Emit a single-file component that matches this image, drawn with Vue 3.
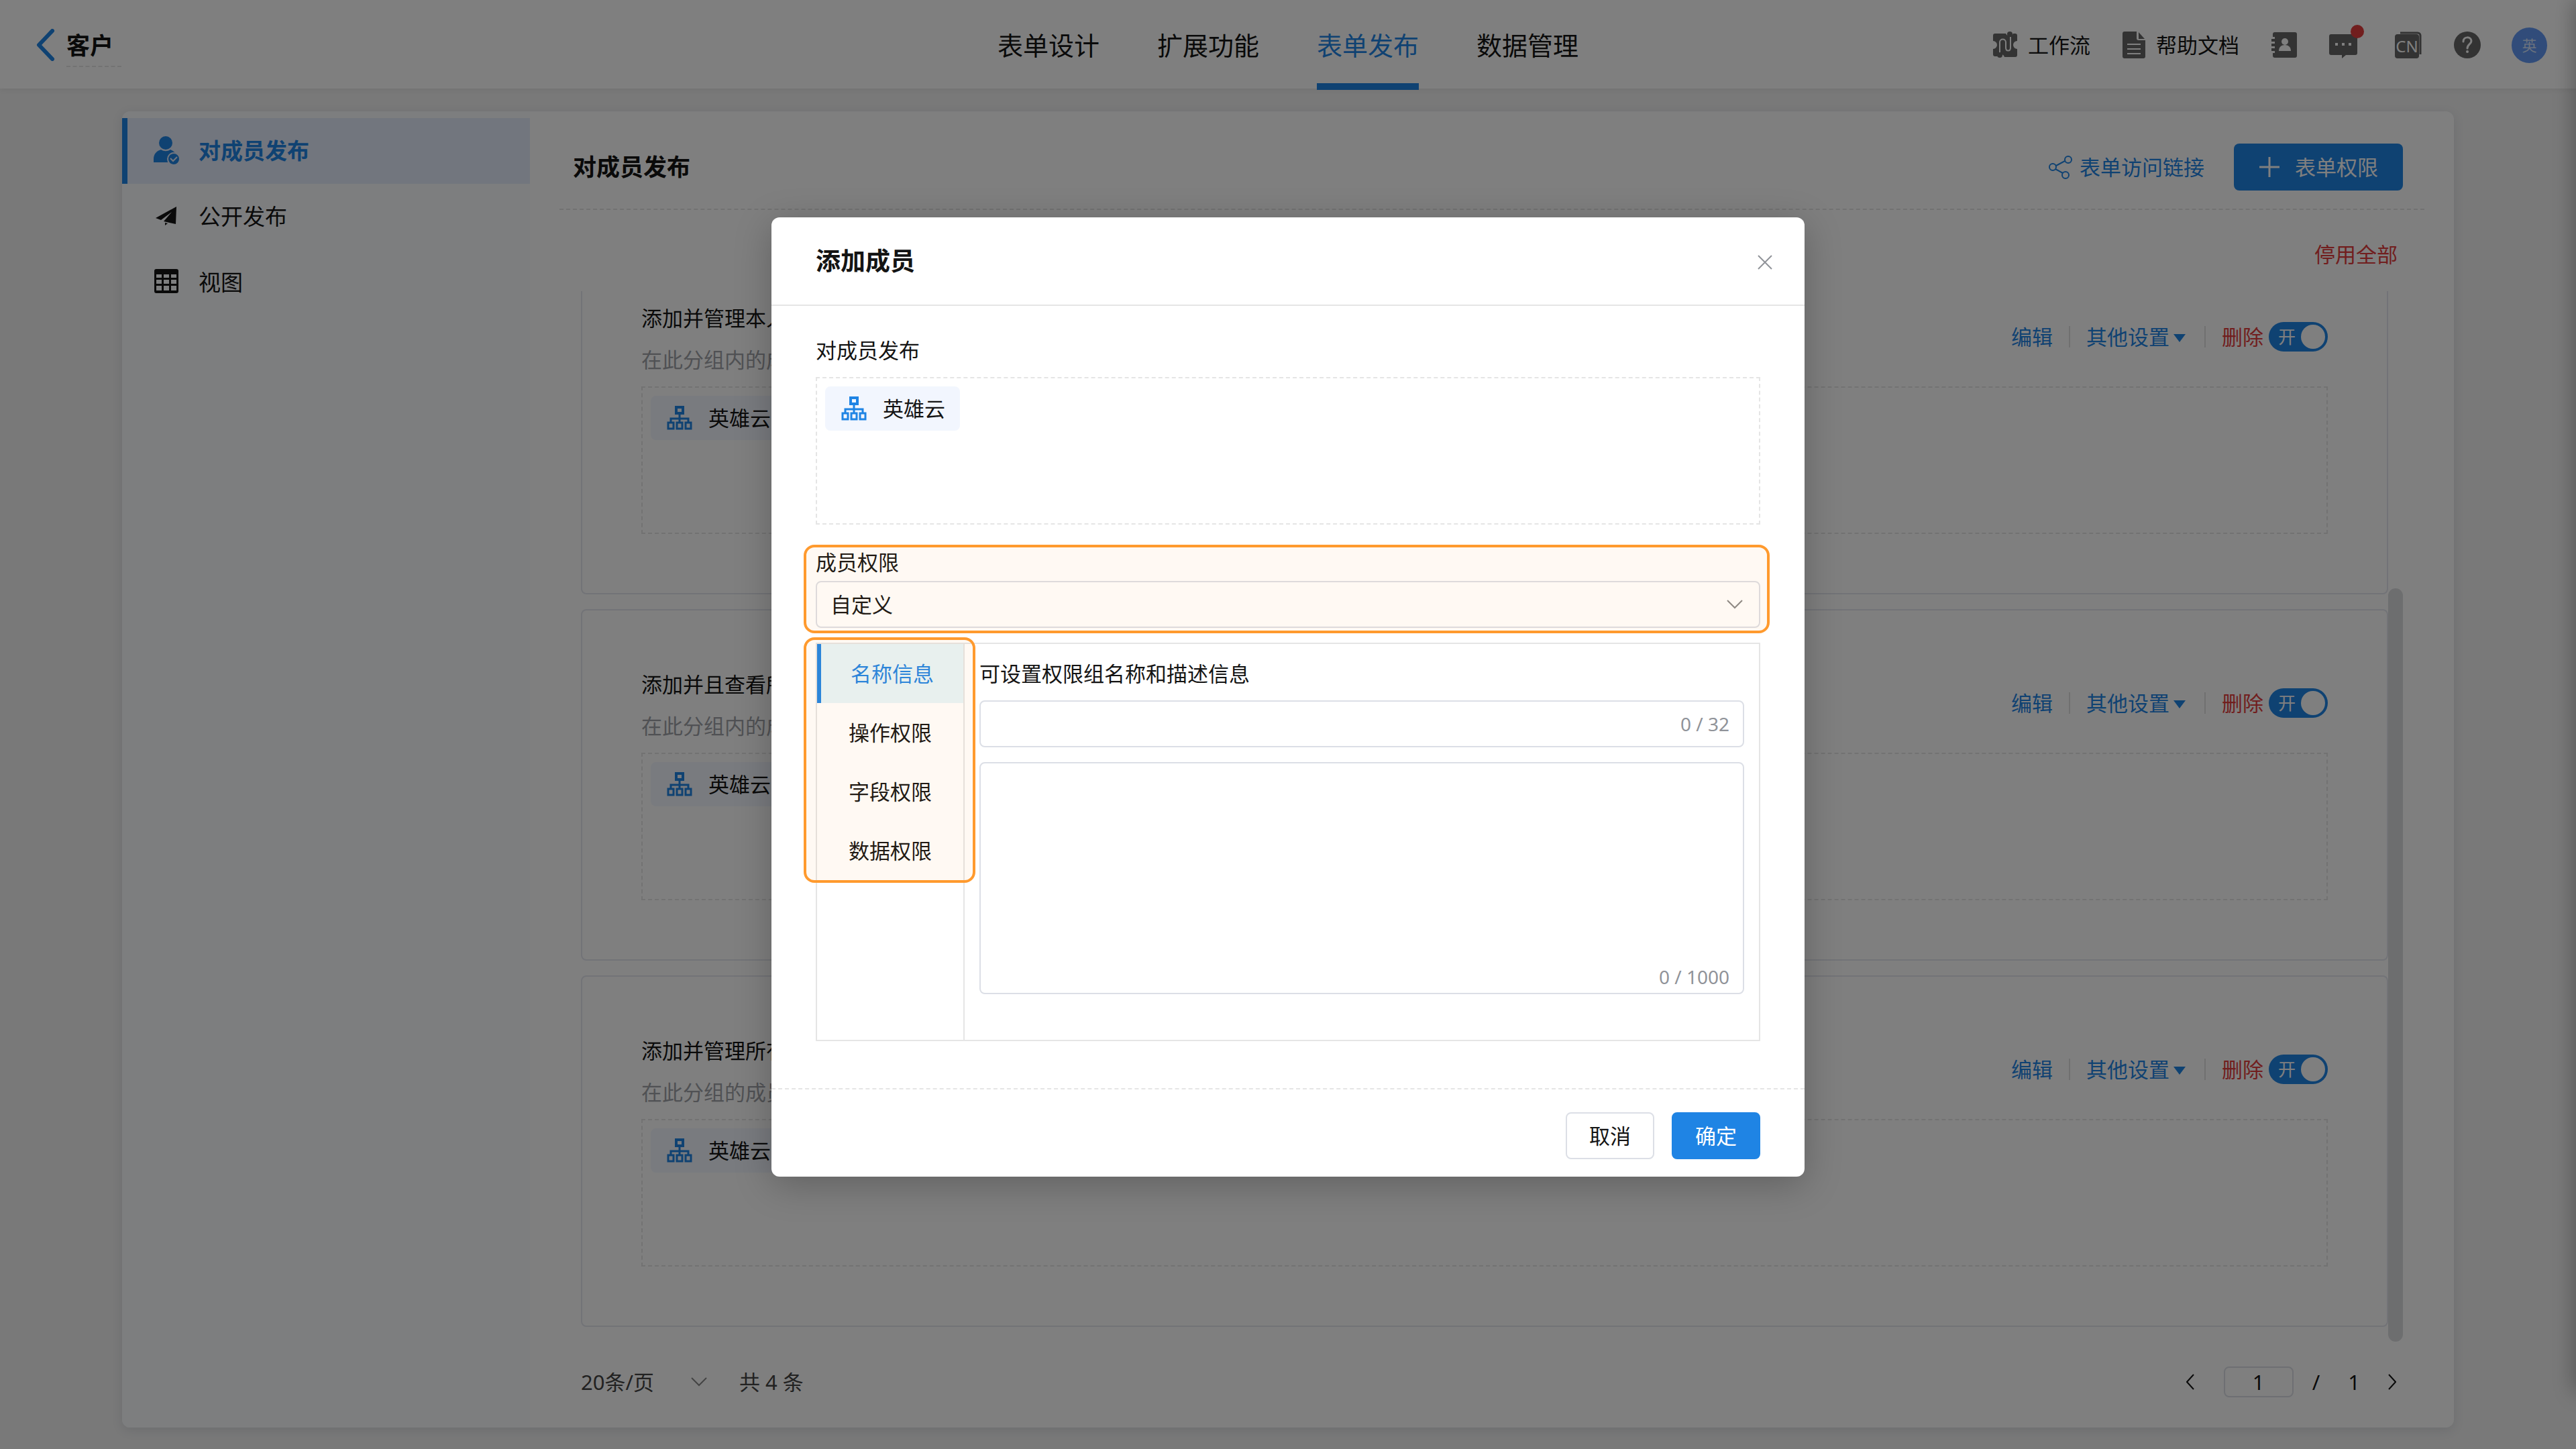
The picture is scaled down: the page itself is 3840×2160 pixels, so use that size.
<template>
  <div class="page">
    <header class="topbar">
      <div class="back">
        <button class="plain" aria-label="返回">
          <svg class="back-icon" viewBox="0 0 28 48"><path d="M24 3 4 24l20 21" fill="none" stroke="currentColor" stroke-width="6" stroke-linecap="round" stroke-linejoin="round" /></svg>
        </button>
        <span class="form-name">客户</span>
      </div>

      <nav class="main-nav">
        <a
          v-for="item in navItems"
          :key="item"
          href="#"
          :class="{ active: item === currentNav }"
          @click.prevent="currentNav = item"
        >{{ item }}</a>
      </nav>

      <div class="tools">
        <a href="#" class="tool-link">
          <svg class="tool-icon" viewBox="0 0 36 40">
            <path fill="currentColor" d="M3 3h16a6 6 0 0 0 11 0h3a3 3 0 0 1 3 3v8a6 6 0 0 0 0 12v9a3 3 0 0 1-3 3H17a6 6 0 0 0-11-1H3a3 3 0 0 1-3-3v-8a6 6 0 0 0 0-12V6a3 3 0 0 1 3-3z" />
            <path fill="none" stroke="#fff" stroke-width="2" d="M10 32V16c0-6 9-6 9 0v8c0 6 7 6 7 0V8" />
            <circle cx="25" cy="4" r="4" fill="currentColor" />
            <circle cx="10" cy="35" r="4" fill="currentColor" />
          </svg>
          <span>工作流</span>
        </a>
        <a href="#" class="tool-link doc-link">
          <svg class="tool-icon doc-icon" viewBox="0 0 34 40">
            <path fill="currentColor" d="M3 0h18v10a3 3 0 0 0 3 3h10v24a3 3 0 0 1-3 3H3a3 3 0 0 1-3-3V3a3 3 0 0 1 3-3z" />
            <path fill="currentColor" d="M24 1l9 10h-9z" />
            <path stroke="#fff" stroke-width="2" d="M7 19h20M7 26h20M7 33h20" />
          </svg>
          <span>帮助文档</span>
        </a>
        <button class="plain" aria-label="通讯录">
          <svg class="tool-icon book-icon" viewBox="0 0 38 40">
            <path fill="currentColor" d="M5 1h30a3 3 0 0 1 3 3v32a3 3 0 0 1-3 3H5a3 3 0 0 1-3-3v-4h3v-3H0v-4h5v-3H0v-4h5v-3H0v-4h5V8H2V4a3 3 0 0 1 3-3z" />
            <circle cx="20" cy="15" r="5" fill="#fff" />
            <path fill="#fff" d="M11 29c0-6 4-9 9-9s9 3 9 9z" />
          </svg>
        </button>
        <button class="plain message" aria-label="消息">
          <svg class="tool-icon message-icon" viewBox="0 0 42 40">
            <path fill="currentColor" d="M3 4h36a3 3 0 0 1 3 3v25a3 3 0 0 1-3 3H25l-6 5v-5H3a3 3 0 0 1-3-3V7a3 3 0 0 1 3-3z" />
            <path fill="#fff" d="M9 17h4v4H9zM19 17h4v4h-4zM29 17h4v4h-4z" />
          </svg>
          <i class="dot"></i>
        </button>
        <button class="plain language" aria-label="语言">
          <svg class="language-back" viewBox="0 0 40 40">
            <path fill="none" stroke="currentColor" stroke-width="3" d="M8 2h26a4 4 0 0 1 4 4v28" />
          </svg>
          <span>CN</span>
        </button>
        <button class="plain" aria-label="帮助">
          <svg class="tool-icon help-icon" viewBox="0 0 40 40">
            <circle cx="20" cy="20" r="20" fill="currentColor" />
            <path fill="none" stroke="#fff" stroke-width="3" stroke-linecap="round" d="M14 15c0-8 12-8 12-1 0 5-6 5-6 11" />
            <circle cx="20" cy="30" r="2" fill="#fff" />
          </svg>
        </button>
        <span class="avatar">英</span>
      </div>
    </header>

    <div class="panel">
      <aside class="sidebar">
        <a href="#" class="side-item active">
          <svg class="side-icon" viewBox="0 0 40 44">
            <circle cx="19" cy="10" r="10" fill="currentColor" />
            <path fill="currentColor" d="M1 39V34c0-7 4-12 11-14 4 3 10 3 14 0 5 2 8 5 9 9v10z" />
            <circle cx="31" cy="34" r="9" fill="currentColor" stroke="#e4ecfc" stroke-width="2" />
            <path fill="none" stroke="#e4ecfc" stroke-width="2" d="M26 33l4 4 6-6" />
          </svg>
          对成员发布
        </a>
        <a href="#" class="side-item">
          <svg class="side-icon" viewBox="0 0 40 44">
            <path fill="currentColor" d="M35 7 4 24l8 3 16-12-12 14 18 4zM18 31v4l4-3z" />
          </svg>
          公开发布
        </a>
        <a href="#" class="side-item">
          <svg class="side-icon" viewBox="0 0 40 44">
            <path fill="currentColor" fill-rule="evenodd" d="M5 2h30a3 3 0 0 1 3 3v30a3 3 0 0 1-3 3H5a3 3 0 0 1-3-3V5a3 3 0 0 1 3-3zM5 10v5h8v-5zM16 10v5h8v-5zM27 10v5h8v-5zM5 18v6h8v-6zM16 18v6h8v-6zM27 18v6h8v-6zM5 27v7h8v-7zM16 27v7h8v-7zM27 27v7h8v-7z" />
          </svg>
          视图
        </a>
      </aside>

      <main class="content">
        <div class="content-head">
          <h1>对成员发布</h1>
          <a href="#" class="share">
            <svg class="share-icon" viewBox="0 0 36 36">
              <g fill="none" stroke="currentColor" stroke-width="2">
                <circle cx="6" cy="18" r="5" /><circle cx="29" cy="7" r="5" /><circle cx="25" cy="30" r="5" />
                <path d="M11 16l13-7M10 21l11 6" />
              </g>
            </svg>
            表单访问链接
          </a>
          <button class="add-button">
            <svg class="plus-icon" viewBox="0 0 32 32"><path d="M16 1v30M1 16h30" stroke="currentColor" stroke-width="3" /></svg>
            表单权限
          </button>
        </div>
        <div class="toolbar">
          <button class="plain danger">停用全部</button>
        </div>

        <div class="list">
          <section v-for="card in cards" :key="card.title" class="card">
            <div class="card-head">
              <div>
                <h2>{{ card.title }}</h2>
                <p>{{ card.desc }}</p>
              </div>
              <div class="ops">
                <button class="plain link">编辑</button>
                <i class="sep"></i>
                <button class="plain link">其他设置<svg class="caret" viewBox="0 0 18 12"><path d="M0 0h18L9 12z" fill="currentColor" /></svg></button>
                <i class="sep"></i>
                <button class="plain danger">删除</button>
                <label class="switch">
                  <input v-model="card.enabled" type="checkbox">
                  <span>开</span>
                </label>
              </div>
            </div>
            <div class="member-box">
              <span class="chip">
                <svg class="org-icon" viewBox="0 0 38 36">
                  <path fill="currentColor" fill-rule="evenodd" d="M12 0h14v13H12zM16 4v5h6V4z" />
                  <path fill="none" stroke="currentColor" stroke-width="3" d="M19 12v12M6 25v-6h26v6M2 25h8v9H2zM15 25h8v9h-8zM28 25h8v9h-8z" />
                </svg>
                英雄云
              </span>
            </div>
          </section>
          <i class="scrollbar"></i>
        </div>

        <footer class="pagination">
          <div class="page-size">
            <select v-model="pageSize" aria-label="每页条数">
              <option value="20">20条/页</option>
            </select>
            <svg class="chevron" viewBox="0 0 24 14"><path d="M1 1l11 11L23 1" fill="none" stroke="currentColor" stroke-width="2" /></svg>
          </div>
          <span class="total">共 4 条</span>
          <div class="pager">
            <button class="plain" aria-label="上一页">
              <svg class="arrow" viewBox="0 0 12 24"><path d="M11 1 1 12l10 11" fill="none" stroke="currentColor" stroke-width="2" /></svg>
            </button>
            <input v-model="page" type="text" aria-label="页码">
            <span>/</span>
            <span class="page-count">1</span>
            <button class="plain" aria-label="下一页">
              <svg class="arrow" viewBox="0 0 12 24"><path d="M1 1l10 11L1 23" fill="none" stroke="currentColor" stroke-width="2" /></svg>
            </button>
          </div>
        </footer>
      </main>
    </div>
    <i class="drawer-edge"></i>

    <div class="mask">
      <div class="dialog" role="dialog" aria-labelledby="dialog-title">
        <div class="dialog-head">
          <h3 id="dialog-title">添加成员</h3>
          <button class="plain close" aria-label="关闭">
            <svg class="close-icon" viewBox="0 0 22 22"><path d="M1 1l20 20M21 1 1 21" stroke="currentColor" stroke-width="2" /></svg>
          </button>
        </div>

        <div class="dialog-body">
          <div class="field-label">对成员发布</div>
          <div class="member-box">
            <span class="chip">
              <svg class="org-icon" viewBox="0 0 38 36">
                <path fill="currentColor" fill-rule="evenodd" d="M12 0h14v13H12zM16 4v5h6V4z" />
                <path fill="none" stroke="currentColor" stroke-width="3" d="M19 12v12M6 25v-6h26v6M2 25h8v9H2zM15 25h8v9h-8zM28 25h8v9h-8z" />
              </svg>
              英雄云
            </span>
          </div>

          <div class="role marked">
            <label for="role">成员权限</label>
            <div class="select-box">
              <select id="role" v-model="role">
                <option value="custom">自定义</option>
              </select>
              <svg class="chevron" viewBox="0 0 24 14"><path d="M1 1l11 11L23 1" fill="none" stroke="currentColor" stroke-width="2" /></svg>
            </div>
          </div>

          <div class="setting">
            <div class="tabs">
              <div class="tab-list marked">
                <button
                  v-for="tab in tabs"
                  :key="tab"
                  class="tab"
                  :class="{ active: tab === currentTab }"
                  @click="currentTab = tab"
                >{{ tab }}</button>
              </div>
            </div>
            <div class="tab-pane">
              <label for="group-name">可设置权限组名称和描述信息</label>
              <div class="input-box">
                <input id="group-name" v-model="groupName" type="text" maxlength="32">
                <span class="count">{{ groupName.length }} / 32</span>
              </div>
              <div class="input-box">
                <textarea v-model="groupDesc" maxlength="1000" aria-label="描述信息"></textarea>
                <span class="count">{{ groupDesc.length }} / 1000</span>
              </div>
            </div>
          </div>
        </div>

        <div class="dialog-foot">
          <button class="btn">取消</button>
          <button class="btn primary">确定</button>
        </div>
      </div>
    </div>
  </div>
</template>

<script setup>
import { ref } from 'vue';

const navItems = ['表单设计', '扩展功能', '表单发布', '数据管理'];
const currentNav = ref('表单发布');

const cards = ref([
  { title: '添加并管理本人', desc: '在此分组内的成', enabled: true },
  { title: '添加并且查看所', desc: '在此分组内的成', enabled: true },
  { title: '添加并管理所有', desc: '在此分组的成员', enabled: true }
]);

const pageSize = ref('20');
const page = ref('1');

const role = ref('custom');
const tabs = ['名称信息', '操作权限', '字段权限', '数据权限'];
const currentTab = ref('名称信息');
const groupName = ref('');
const groupDesc = ref('');
</script>

<style>
body {
  background: #f2f2f2;
}
</style>

<style scoped>
.page {
  position: relative;
  display: flex;
  flex-direction: column;
  height: 100vh;
  overflow: hidden;
  font-family: "Noto Sans", "Noto Sans CJK SC", sans-serif;
  font-size: 31px;
  line-height: 44px;
  color: #141414;
}

.page *, .page *::after {
  box-sizing: border-box;
}

a {
  color: inherit;
  text-decoration: none;
}

svg {
  display: block;
  flex: none;
}

h1, h2, h3, p {
  margin: 0;
}

button, input, select, textarea {
  font: inherit;
  color: inherit;
}

.plain {
  padding: 0;
  border: none;
  background: none;
  cursor: pointer;
}

/* top bar */
.topbar {
  position: relative;
  display: grid;
  grid-template-columns: 1fr auto 1fr;
  flex: none;
  height: 132px;
  background: #fff;
  box-shadow: 0 2px 8px rgba(0, 0, 0, 0.06);
}

.back {
  display: flex;
  align-items: center;
  gap: 17px;
  padding-left: 54px;
}

.back button {
  color: #1f84e4;
}

.back-icon {
  width: 28px;
  height: 48px;
}

.form-name {
  min-width: 82px;
  padding-top: 4px;
  border-bottom: 2px dashed #e5e5e5;
  font-size: 35px;
  font-weight: 700;
  line-height: 60px;
}

.main-nav {
  display: flex;
  gap: 86px;
  font-size: 38px;
}

.main-nav a {
  height: 134px;
  line-height: 134px;
}

.main-nav .active {
  border-bottom: 10px solid #1f84e4;
  color: #1f84e4;
}

.tools {
  display: flex;
  align-items: center;
  justify-content: flex-end;
  padding-right: 43px;
}

.tools svg, .tools button {
  color: #666;
}

.tool-link {
  display: flex;
  align-items: center;
  gap: 16px;
  margin-right: 48px;
}

.tool-icon {
  width: 36px;
  height: 40px;
}

.doc-icon {
  width: 34px;
}

.book-icon {
  width: 38px;
}

.message-icon {
  width: 42px;
}

.help-icon {
  width: 40px;
}

.message {
  position: relative;
  margin: 0 56px 0 48px;
}

.dot {
  position: absolute;
  top: -10px;
  right: -10px;
  width: 20px;
  height: 20px;
  border-radius: 50%;
  background: #e23c3c;
}

.language {
  position: relative;
  width: 40px;
  height: 40px;
  padding: 4px 4px 0 0;
  margin-right: 48px;
}

.language-back {
  position: absolute;
  inset: 0;
}

.language span {
  display: block;
  height: 36px;
  border-radius: 4px;
  background: #666;
  color: #fff;
  font-size: 24px;
  line-height: 36px;
}

.avatar {
  width: 53px;
  height: 53px;
  margin-left: 46px;
  border-radius: 50%;
  background: #6299f5;
  color: #d5e3fc;
  font-size: 22px;
  line-height: 53px;
  text-align: center;
}

/* panel */
.panel {
  display: flex;
  flex: 1;
  min-height: 0;
  margin: 34px 182px 32px;
  border-radius: 12px;
  background: #fff;
  box-shadow: 0 4px 16px rgba(40, 60, 90, 0.12);
  overflow: hidden;
}

.sidebar {
  flex: none;
  width: 608px;
  padding-top: 10px;
  background: #fafcff;
}

.side-item {
  display: flex;
  align-items: center;
  gap: 28px;
  height: 98px;
  padding-left: 38px;
  border-left: 8px solid transparent;
  font-size: 33px;
}

.side-item.active {
  border-left-color: #1f84e4;
  background: #e4ecfc;
  color: #1f84e4;
  font-weight: 700;
}

.side-icon {
  width: 40px;
  height: 44px;
}

.content {
  display: flex;
  flex: 1;
  flex-direction: column;
  min-width: 0;
}

.content-head {
  display: flex;
  align-items: center;
  padding: 48px 32px 27px 20px;
  margin: 0 44px;
  border-bottom: 2px dashed #e5e5e5;
}

.content-head h1 {
  flex: 1;
  font-size: 35px;
}

.share {
  display: flex;
  align-items: center;
  gap: 10px;
  margin-right: 44px;
  color: #1f84e4;
}

.share-icon {
  width: 36px;
  height: 36px;
}

.add-button {
  display: flex;
  align-items: center;
  gap: 22px;
  height: 70px;
  padding: 0 37px;
  border: none;
  border-radius: 8px;
  background: #1f84e4;
  color: #fff;
}

.plus-icon {
  width: 32px;
  height: 32px;
}

.toolbar {
  display: flex;
  justify-content: flex-end;
  padding: 44px 84px 33px;
}

.danger {
  color: #e23c3c;
}

.link {
  color: #1f84e4;
}

.list {
  position: relative;
  display: flex;
  flex: 1;
  flex-direction: column;
  justify-content: flex-end;
  min-height: 0;
  padding-right: 22px;
  margin: 0 76px;
  overflow: hidden;
}

.card {
  flex: none;
  padding: 88px;
  margin-bottom: 22px;
  border: 2px solid #e4e6ee;
  border-radius: 8px;
}

.card-head {
  display: flex;
  justify-content: space-between;
  margin-bottom: 18px;
}

.card h2 {
  margin-bottom: 18px;
  font-size: 31px;
  font-weight: 400;
}

.card p {
  color: #a0a3a8;
}

.ops {
  display: flex;
  align-items: center;
  height: 44px;
  margin-top: 28px;
}

.ops .link {
  display: flex;
  align-items: center;
  gap: 6px;
}

.sep {
  width: 2px;
  height: 32px;
  margin: 0 24px;
  background: #e0e0e0;
}

.caret {
  width: 18px;
  height: 12px;
  margin: 4px 4px 0 0;
}

.switch {
  position: relative;
  margin-left: 8px;
}

.switch input {
  display: flex;
  align-items: center;
  width: 88px;
  height: 44px;
  padding: 0 4px;
  margin: 0;
  border-radius: 22px;
  background: #c0c4cc;
  appearance: none;
}

.switch input::after {
  content: "";
  width: 36px;
  height: 36px;
  border-radius: 50%;
  background: #fff;
}

.switch input:checked {
  justify-content: flex-end;
  background: #1f84e4;
}

.switch span {
  position: absolute;
  top: 0;
  left: 14px;
  color: #fff;
  font-size: 26px;
}

.member-box {
  height: 220px;
  padding: 12px;
  border: 2px dashed #e5e5e5;
}

.chip {
  display: inline-flex;
  align-items: center;
  gap: 24px;
  height: 66px;
  padding: 0 22px 0 24px;
  border-radius: 8px;
  background: #f2f6fe;
}

.org-icon {
  width: 38px;
  height: 36px;
  color: #1f84e4;
}

.scrollbar {
  position: absolute;
  right: 0;
  bottom: 0;
  width: 22px;
  height: calc(1566 / 2184 * 100%);
  border-radius: 11px;
  background: #dadcdf;
}

.pagination {
  display: flex;
  align-items: center;
  height: 128px;
  padding: 0 86px 8px 76px;
}

.page-size {
  position: relative;
  width: 188px;
  margin-right: 48px;
}

.page-size select {
  width: 100%;
  padding: 0;
  border: none;
  background: none;
  color: #444;
  appearance: none;
}

.chevron {
  position: absolute;
  top: 50%;
  right: 0;
  width: 24px;
  height: 14px;
  margin-top: -7px;
  color: #888;
  pointer-events: none;
}

.total {
  flex: 1;
  color: #444;
}

.pager {
  display: flex;
  align-items: center;
  gap: 28px;
}

.pager input {
  width: 104px;
  height: 46px;
  padding: 0;
  margin-left: 16px;
  border: 2px solid #dcdfe6;
  border-radius: 8px;
  background: none;
  text-align: center;
}

.page-count {
  margin: 0 14px;
}

.arrow {
  width: 12px;
  height: 24px;
}

.drawer-edge {
  position: absolute;
  top: 0;
  bottom: 86px;
  left: 100%;
  width: 20px;
  box-shadow: 0 0 32px rgba(0, 0, 0, 0.4);
}

/* dialog */
.mask {
  position: absolute;
  inset: 0;
  background: rgba(0, 0, 0, 0.5);
}

.dialog {
  width: 1540px;
  max-width: 100%;
  margin: 15vh auto 0;
  border-radius: 12px;
  background: #fff;
  box-shadow: 0 12px 56px rgba(0, 0, 0, 0.24);
}

.dialog-head {
  display: flex;
  align-items: center;
  justify-content: space-between;
  height: 132px;
  padding: 0 48px 0 66px;
  border-bottom: 2px solid #e5e5e5;
}

.dialog-head h3 {
  font-size: 37px;
}

.close {
  padding-top: 4px;
}

.close-icon {
  width: 22px;
  height: 22px;
  color: #909399;
}

.dialog-body {
  padding: 44px 66px 70px;
}

.field-label {
  margin-bottom: 18px;
}

.marked {
  position: relative;
}

.marked::after {
  content: "";
  position: absolute;
  inset: -4px -14px -8px -18px;
  border: 4px solid #ff9a2e;
  border-radius: 16px;
  background: rgba(255, 154, 46, 0.06);
  pointer-events: none;
}

.role {
  margin-top: 34px;
}

.role label {
  display: block;
  height: 50px;
}

.select-box {
  position: relative;
}

.select-box select {
  display: block;
  width: 100%;
  height: 70px;
  padding: 0 20px;
  border: 2px solid #dcdfe6;
  border-radius: 8px;
  background: none;
  appearance: none;
}

.select-box .chevron {
  right: 26px;
}

.setting {
  display: flex;
  height: 594px;
  margin-top: 22px;
  border: 2px solid #e5e5e5;
}

.tabs {
  flex: none;
  width: 220px;
  border-right: 2px solid #e5e5e5;
}

.tab-list::after {
  inset: -10px -18px -4px -20px;
}

.tab {
  display: block;
  width: 100%;
  height: 88px;
  padding: 0;
  border: none;
  background: none;
  text-align: center;
}

.tab.active {
  border-left: 6px solid #1f84e4;
  background: #e7f6fa;
  color: #1f84e4;
}

.tab-pane {
  flex: 1;
  padding: 22px;
}

.tab-pane label {
  display: block;
  margin-bottom: 18px;
}

.input-box {
  position: relative;
  margin-bottom: 22px;
}

.input-box input, .input-box textarea {
  display: block;
  width: 100%;
  height: 70px;
  padding: 0 22px;
  border: 2px solid #dcdfe6;
  border-radius: 8px;
  background: #fff;
}

.input-box textarea {
  height: 346px;
  padding: 12px 22px;
  resize: none;
}

.count {
  position: absolute;
  right: 22px;
  bottom: 8px;
  color: #909399;
  font-size: 28px;
  line-height: 36px;
}

.input-box input + .count {
  bottom: 17px;
}

.dialog-foot {
  display: flex;
  justify-content: flex-end;
  gap: 26px;
  padding: 34px 66px 26px;
  border-top: 2px dashed #e5e5e5;
}

.btn {
  width: 132px;
  height: 70px;
  padding: 0;
  border: 2px solid #dcdfe6;
  border-radius: 8px;
  background: #fff;
}

.btn.primary {
  border-color: #1f84e4;
  background: #1f84e4;
  color: #fff;
}
</style>
